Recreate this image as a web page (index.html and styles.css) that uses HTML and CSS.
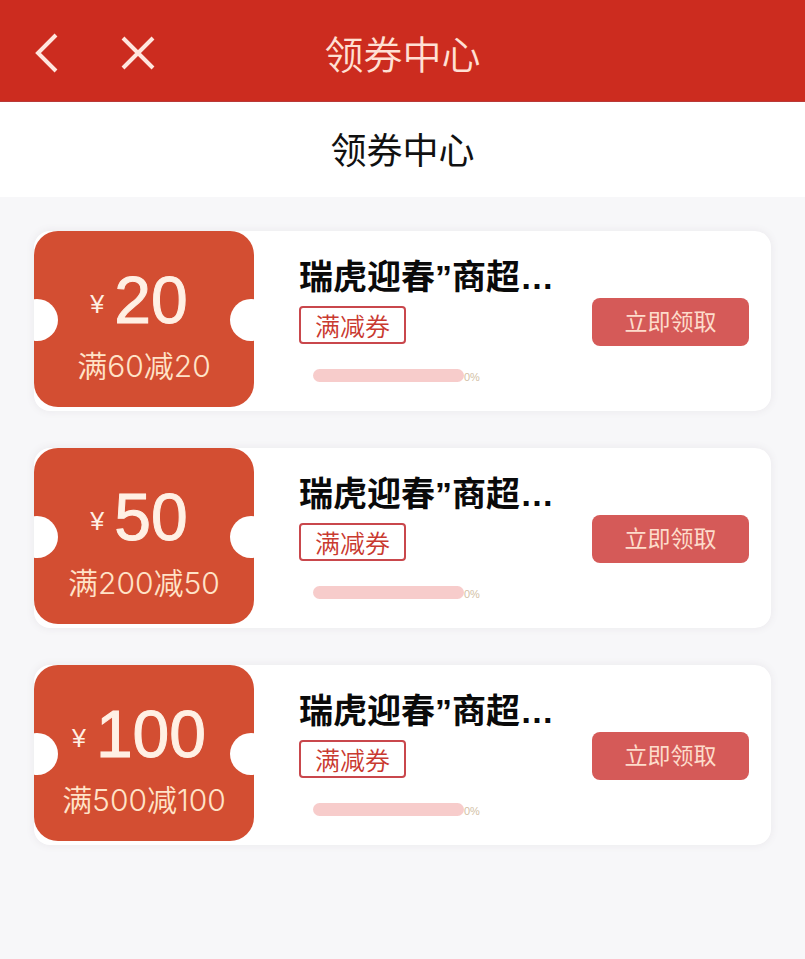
FILE: index.html
```
<!DOCTYPE html>
<html lang="zh-CN">
<head>
	<title>领券中心</title>
	<meta charset="utf-8">
	<meta name="viewport" content="width=device-width, initial-scale=1">
	<link rel="stylesheet" href="styles.css">
</head>
<body>
	<header class="topbar">
		<div class="nav">
			<button class="nav-btn" type="button" aria-label="返回">
				<svg width="40" height="40" viewBox="0 0 40 40"><path d="M30 3 L12 21 L30 39"/></svg>
			</button>
			<button class="nav-btn" type="button" aria-label="关闭">
				<svg width="40" height="40" viewBox="0 0 40 40"><path d="M5 6 L35 36 M35 6 L5 36"/></svg>
			</button>
		</div>
		<div class="topbar-title">领券中心</div>
	</header>
	<h1 class="page-title">领券中心</h1>
	<!-- 优惠券列表 -->
	<main class="list">
		<div class="card">
			<div class="coupon">
				<div class="amount"><span class="yen">¥</span>20</div>
				<div class="rule">满60减20</div>
			</div>
			<div class="info">
				<h2 class="name">瑞虎迎春”商超…</h2>
				<span class="tag">满减券</span>
				<div class="rate">
					<progress id="rate1" value="0" max="100" aria-label="已领取"></progress>
					<label for="rate1">0%</label>
				</div>
			</div>
			<button class="get" type="button">立即领取</button>
		</div>
		<div class="card">
			<div class="coupon">
				<div class="amount"><span class="yen">¥</span>50</div>
				<div class="rule">满200减50</div>
			</div>
			<div class="info">
				<h2 class="name">瑞虎迎春”商超…</h2>
				<span class="tag">满减券</span>
				<div class="rate">
					<progress id="rate2" value="0" max="100" aria-label="已领取"></progress>
					<label for="rate2">0%</label>
				</div>
			</div>
			<button class="get" type="button">立即领取</button>
		</div>
		<div class="card">
			<div class="coupon">
				<div class="amount"><span class="yen">¥</span>100</div>
				<div class="rule">满500减100</div>
			</div>
			<div class="info">
				<h2 class="name">瑞虎迎春”商超…</h2>
				<span class="tag">满减券</span>
				<div class="rate">
					<progress id="rate3" value="0" max="100" aria-label="已领取"></progress>
					<label for="rate3">0%</label>
				</div>
			</div>
			<button class="get" type="button">立即领取</button>
		</div>
	</main>
</body>
</html>
```
FILE: styles.css
```
*{
	margin: 0;
	padding: 0;
	box-sizing: border-box;
}
body{
	background: #f7f7f9;
	color: #111;
	font-family: "Liberation Sans", "Noto Sans CJK SC", sans-serif;
}
button{
	border: 0;
	font-family: inherit;
	cursor: pointer;
}

/* 顶部导航 */
.topbar{
	display: grid;
	grid-template-columns: 1fr auto 1fr;
	align-items: center;
	padding: 23px 26px 20px;
	background: #cc2c1f;
	border-bottom: 1px solid #b93a38;
}
.nav{
	display: flex;
	gap: 52px;
}
.nav-btn{
	width: 40px;
	height: 40px;
	background: none;
}
.nav-btn svg{
	display: block;
	overflow: visible;
	fill: none;
	stroke: #ffe6de;
	stroke-width: 4;
}
.topbar-title{
	font-size: 39px;
	line-height: 58px;
	font-weight: 350;
	font-family: "Noto Sans CJK SC", sans-serif;
	color: #ffe0d4;
}
.page-title{
	padding: 19px 0 22px;
	background: #fff;
	font-family: "Noto Sans CJK SC", sans-serif;
	font-size: 36px;
	line-height: 54px;
	font-weight: 400;
	text-align: center;
}

/* 列表 */
.list{
	display: flex;
	flex-direction: column;
	gap: 37px;
	padding: 34px;
}
.card{
	display: flex;
	align-items: flex-start;
	height: 180px;
	background: #fff;
	border-radius: 16px;
	box-shadow: 0 0 6px 2px #eeedf0;
}
.coupon{
	position: relative;
	overflow: hidden;
	width: 220px;
	height: 176px;
	padding-top: 34px;
	border-radius: 24px;
	background: #d34e32;
	color: #fff0e4;
	text-align: center;
}
/* 两侧的半圆缺口 */
.coupon:before,
.coupon:after{
	content: "";
	position: absolute;
	top: 68px;
	width: 42px;
	height: 42px;
	border-radius: 50%;
	background: #fff;
}
.coupon:before{
	left: -18px;
}
.coupon:after{
	right: -18px;
}
.amount{
	padding-right: 10px;
	font-size: 66px;
	line-height: 70px;
	-webkit-text-stroke: 1px #fff0e4;
}
.yen{
	margin-right: 10px;
	font-size: 25px;
	line-height: 1;
	vertical-align: 10px;
	-webkit-text-stroke: 0;
}
.rule{
	font-family: Inter, "Noto Sans CJK SC", sans-serif;
	font-size: 30px;
	line-height: 62px;
	font-weight: 350;
	color: #ffe3c8;
}
.info{
	flex: 1;
	min-width: 0;
	padding: 24px 0 0 45px;
}
.name{
	overflow: hidden;
	white-space: nowrap;
	font-family: "Liberation Sans", "Noto Sans CJK SC", sans-serif;
	font-size: 34px;
	line-height: 44px;
	font-weight: 700;
	color: #0a0a0a;
}
.tag{
	display: block;
	width: 107px;
	margin-top: 7px;
	border: 2px solid #c9474c;
	border-radius: 4px;
	font-family: "Noto Sans CJK SC", sans-serif;
	font-size: 25px;
	line-height: 34px;
	font-weight: 350;
	text-align: center;
	color: #c9392f;
}
.rate{
	display: flex;
	align-items: center;
	margin: 24px 0 0 14px;
	height: 14px;
	font-size: 11px;
	line-height: 14px;
	color: #d3bfa6;
}
.rate progress{
	-webkit-appearance: none;
	appearance: none;
	width: 151px;
	height: 13px;
	border: 0;
	border-radius: 7px;
	background: #f7cccb;
	overflow: hidden;
}
.rate progress::-webkit-progress-bar{
	background: #f7cccb;
}
.rate progress::-webkit-progress-value{
	background: #d55a58;
}
.rate label{
	padding-top: 4px;
}
.get{
	width: 157px;
	margin: 67px 22px 0 0;
	padding-bottom: 4px;
	border-radius: 8px;
	background: #d55a58;
	font-family: "Noto Sans CJK SC", sans-serif;
	font-size: 23px;
	line-height: 44px;
	font-weight: 400;
	color: #fddccb;
}
```
